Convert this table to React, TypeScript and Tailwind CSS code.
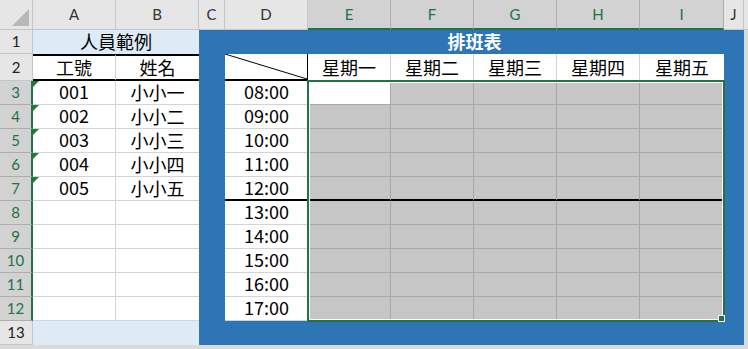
import React from 'react'

const COL = ['', 'col-start-1', 'col-start-2', 'col-start-3', 'col-start-4', 'col-start-5', 'col-start-6', 'col-start-7', 'col-start-8', 'col-start-9', 'col-start-10', 'col-start-11', 'col-start-12']
const ROW = ['', 'row-start-1', 'row-start-2', 'row-start-3', 'row-start-4', 'row-start-5', 'row-start-6', 'row-start-7', 'row-start-8', 'row-start-9', 'row-start-10', 'row-start-11', 'row-start-12', 'row-start-13', 'row-start-14']

const letters = ['A', 'B', 'C', 'D', 'E', 'F', 'G', 'H', 'I', 'J']
const people = [
  ['001', '小小一'],
  ['002', '小小二'],
  ['003', '小小三'],
  ['004', '小小四'],
  ['005', '小小五'],
]
const days = ['星期一', '星期二', '星期三', '星期四', '星期五']
const times = ['08:00', '09:00', '10:00', '11:00', '12:00', '13:00', '14:00', '15:00', '16:00', '17:00']
const sheetRows = [1, 2, 3, 4, 5, 6, 7, 8, 9, 10, 11, 12, 13]
const bodyRows = [3, 4, 5, 6, 7, 8, 9, 10, 11, 12]

interface CellProps {
  col: number
  row: number // grid row (sheet row + 1)
  className?: string
  children?: React.ReactNode
}

const Cell: React.FC<CellProps> = ({ col, row, className = '', children }) => (
  <div className={`${COL[col]} ${ROW[row]} flex items-center justify-center ${className}`}>{children}</div>
)

const ColumnHeaders = () => (
  <>
    <Cell col={1} row={1} className="!items-end !justify-end pr-[3px] pb-[3px] bg-[#E6E6E6] border-r border-b border-[#C6C6C6]">
      <svg width="17" height="17" viewBox="0 0 17 17">
        <polygon points="17,0 17,17 0,17" fill="#B8B8B8" />
      </svg>
    </Cell>
    {letters.map((l, i) => {
      const sel = i >= 4 && i <= 8
      return (
        <Cell
          key={l}
          col={i + 2}
          row={1}
          className={
            sel
              ? 'bg-[#D2D2D2] text-[#217346] border-r border-[#ADADAD] border-b-2 border-b-[#217346]'
              : 'bg-[#E6E6E6] text-[#333] border-r border-b border-[#C6C6C6]'
          }
        >
          {l}
        </Cell>
      )
    })}
    <Cell col={12} row={1} className="bg-[#E6E6E6] border-b border-[#C6C6C6]" />
  </>
)

const RowHeaders = () => (
  <>
    {sheetRows.map((r) => {
      const sel = r >= 3 && r <= 12
      return (
        <Cell
          key={r}
          col={1}
          row={r + 1}
          className={
            sel
              ? 'bg-[#D2D2D2] text-[#217346] border-b border-[#ADADAD] border-r-2 border-r-[#217346]'
              : 'bg-[#E6E6E6] text-[#222] border-b border-r border-[#C6C6C6]'
          }
        >
          {r}
        </Cell>
      )
    })}
  </>
)

export default function App() {
  return (
    <div className="w-[748px] h-[349px] overflow-hidden bg-[#DADADA]">
      <div className="grid grid-cols-[33px_83px_83px_26px_83px_83px_83px_83px_83px_84px_20px_1fr] grid-rows-[30px_24px_27px_repeat(11,24px)]">
        <div className="contents font-['Lato','Liberation_Sans',sans-serif] text-[15px]">
          <ColumnHeaders />
          <RowHeaders />
        </div>

        <div className="contents font-['Noto_Sans_CJK_TC','Noto_Sans',sans-serif] text-[18px] leading-none text-black">
          {/* 人員範例 */}
          <Cell col={2} row={2} className="col-span-2 pb-[2px] bg-[#DDEBF7]">人員範例</Cell>
          <Cell col={2} row={3} className="pb-[2px] bg-white border-y-2 border-black border-r border-r-[#D4D4D4]">工號</Cell>
          <Cell col={3} row={3} className="pb-[2px] bg-white border-y-2 border-black">姓名</Cell>
          {bodyRows.map((r) => {
            const p = people[r - 3]
            return (
              <React.Fragment key={r}>
                <Cell col={2} row={r + 1} className="relative pb-[3px] bg-white border-r border-b border-[#D4D4D4]">
                  {p && (
                    <span className="absolute left-0 top-0 w-0 h-0 border-t-[6px] border-r-[6px] border-t-[#1F7A36] border-r-transparent" />
                  )}
                  {p ? p[0] : ''}
                </Cell>
                <Cell col={3} row={r + 1} className="pb-[2px] bg-white border-b border-[#D4D4D4]">
                  {p ? p[1] : ''}
                </Cell>
              </React.Fragment>
            )
          })}
          <Cell col={2} row={14} className="col-span-2 bg-[#DDEBF7]" />

          {/* blue frame */}
          <Cell col={4} row={2} className="row-span-13 bg-[#2E75B6]" />
          <Cell col={11} row={2} className="row-span-13 bg-[#2E75B6]" />
          <Cell col={5} row={2} className="col-span-6 pb-[2px] bg-[#2E75B6] text-white font-bold">排班表</Cell>
          <Cell col={5} row={14} className="col-span-6 bg-[#2E75B6]" />

          {/* 排班表 header */}
          <Cell col={5} row={3} className="relative bg-white border-r border-r-black border-b-2 border-b-black">
            <svg className="absolute inset-0 w-full h-full" viewBox="0 0 100 100" preserveAspectRatio="none">
              <line x1="0" y1="0" x2="100" y2="100" stroke="#000" strokeWidth="1" vectorEffect="non-scaling-stroke" />
            </svg>
          </Cell>
          {days.map((d, i) => (
            <Cell key={d} col={i + 6} row={3} className={i < 4 ? 'pb-[2px] bg-white border-r border-[#D4D4D4]' : 'pb-[2px] bg-white'}>
              {d}
            </Cell>
          ))}

          {bodyRows.map((r, ri) => (
            <React.Fragment key={r}>
              <Cell
                col={5}
                row={r + 1}
                className={r === 7 ? 'pb-[3px] bg-white border-b-2 border-black' : 'pb-[3px] bg-white border-b border-[#D4D4D4]'}
              >
                {times[ri]}
              </Cell>
              {days.map((d, ci) => {
                const active = r === 3 && ci === 0
                const fill = active ? 'bg-white' : 'bg-[#C6C6C6]'
                const line = r === 7 ? 'border-r border-[#A8A8A8] border-b-2 border-b-black' : 'border-r border-b border-[#A8A8A8]'
                return <Cell key={d} col={ci + 6} row={r + 1} className={`${fill} ${line}`} />
              })}
            </React.Fragment>
          ))}

          {/* selection E3:I12 */}
          <div className="col-start-6 col-span-5 row-start-4 row-span-10 -m-px relative z-10 pointer-events-none border-2 border-[#217346] shadow-[inset_0_0_0_1px_#ffffff]">
            <span className="absolute -right-[2px] -bottom-[2px] w-[7px] h-[7px] bg-[#217346] border border-white" />
          </div>
        </div>
      </div>
    </div>
  )
}
